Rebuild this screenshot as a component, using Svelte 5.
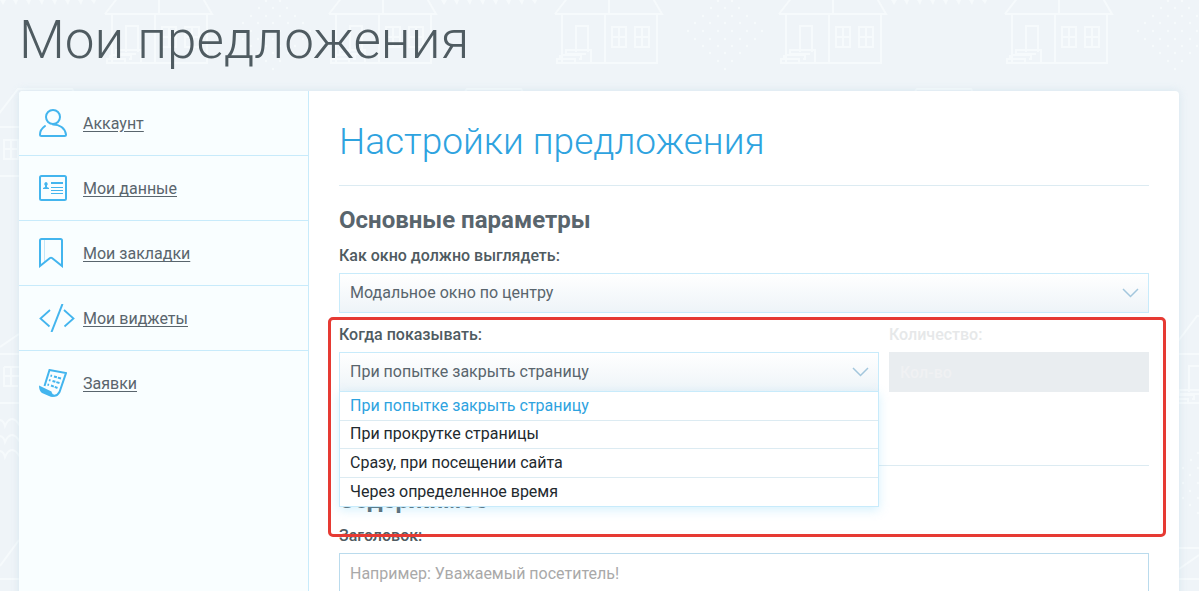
<script lang="ts">
    let views = ['Модальное окно по центру'];
    let moments = [
        'При попытке закрыть страницу',
        'При прокрутке страницы',
        'Сразу, при посещении сайта',
        'Через определенное время'
    ];

    let menu = [
        { icon: 'user', title: 'Аккаунт' },
        { icon: 'card', title: 'Мои данные' },
        { icon: 'bookmark', title: 'Мои закладки' },
        { icon: 'code', title: 'Мои виджеты' },
        { icon: 'scroll', title: 'Заявки' }
    ];

    let view = views[0];
    let moment = moments[0];
    let opened = true;

    // crown of a tree: [y, list of x], around its centre
    let dots = [
        [-30, [-7, 7]], [-23, [-14, 0, 14]], [-15, [-22, -7, 7, 22]],
        [-8, [-30, -15, 0, 15, 30]], [0, [-37, -22, -7, 7, 22, 37]],
        [8, [-30, -15, 0, 15, 30]], [15, [-22, -7, 7, 22]],
        [22, [-15, 0, 15]], [30, [-7, 7]], [38, [0]]
    ] as [number, number[]][];

    function choose(item: string) {
        moment = item;
        opened = false;
    }
</script>

<div class="page">
    <svg class="pattern" aria-hidden="true" fill="none" stroke="#f6fafc" stroke-width="2">
        <defs>
            <g id="house">
                <path d="M1 0H108L97-19 86-38H30L18-22 1 0M43-38 55-15V0M8 0V49H103V0M51 0V49"/>
                <path d="M22 38V12H34V38M37 49V36H12V40H32M7 41H27V45H25M3 45H21V49H3ZM6 41V45"/>
                <path d="M58 13H72V33H58ZM58 23H72M65 13V33M81 13H95V33H81ZM81 23H95M88 13V33"/>
            </g>
            <g id="tree">
                {#each dots as [y, row]}
                    {#each row as x}
                        <circle cx={x} cy={y} r="1.2" fill="#f6fafc" stroke="none"/>
                    {/each}
                {/each}
            </g>
        </defs>
        {#each [104, 328, 554, 778, 1004] as x}
            <use href="#house" x={x} y="14"/>
        {/each}
        {#each [273, 725, 1175] as x}
            <use href="#tree" x={x} y="31"/>
        {/each}
        {#each [0, 441, 891] as x}
            <path fill="#f6fafc" stroke="none" d="M{x} 0h6l-3 5zm13 0h5l-2 5zm13 0h5l-2 5zm13 0h5l-2 5zm13 0h5l-2 5zm13 0h5l-2 5zm13 0h5l-2 5zm13 0h5l-2 4z"/>
        {/each}
        {#each [18, 467, 917] as x}
            <path d="M{x - 20} 115 {x} 89H{x + 54}L{x + 70} 115"/>
        {/each}
        <path d="M0 127H20M4 140H18V159H4ZM4 149H20M11 140V159M0 176H20"/>
        <path d="M0 347 19 334M0 354H20M4 367H20M4 367V386H18M4 376H20M11 367V386M0 403H20M0 579H20M0 566 19 540"/>
        <path d="M0 420q4 1 5 6 3-7 7-7t8 7M0 436q4 1 5 6 3-7 7-7t8 7M0 451q4 1 5 6 3-7 7-7t8 7"/>
        <use href="#house" x="1167" y="354"/>
        <use href="#tree" x="1205" y="483"/>
        <path d="M1179 548H1199M1179 579H1199M1179 569 1199 555"/>
    </svg>

    <h1>Мои предложения</h1>

    <div class="card">
        <nav>
            {#each menu as item}
                <div class="item">
                    <span class="icon">
                        {#if item.icon == 'user'}
                            <svg width="28" height="28" fill="none" stroke="currentColor" stroke-width="2">
                                <circle cx="14" cy="8" r="7"/>
                                <path d="M6 17C2.500 19.500 1 22.500 1 25.500Q1 27 2.500 27H25.500Q27 27 27 25.500C26 19 20.500 15.500 14 15.500" stroke-linecap="round"/>
                            </svg>
                        {:else if item.icon == 'card'}
                            <svg width="28" height="26" fill="none" stroke="currentColor" stroke-width="2">
                                <rect x="1" y="1" width="26" height="24" rx="1.500"/>
                                <path d="M12 8H24"/>
                                <path d="M12 12.500H24M12 15.500H24M12 18.500H24" stroke-width="1"/>
                                <path d="M7 7a2 2 0 0 1 1 3.500V12l2 1v1H4v-1l2-1v-1.500A2 2 0 0 1 7 7Z" fill="currentColor" stroke="none"/>
                            </svg>
                        {:else if item.icon == 'bookmark'}
                            <svg width="24" height="30" fill="none" stroke="currentColor" stroke-width="2">
                                <path d="M5.500 2V25" stroke="#c3e6f9" stroke-width="1"/>
                                <path d="M1 28V2.500Q1 1 2.500 1H21.500Q23 1 23 2.500V28L13 20Q12 19.300 11 20Z"/>
                            </svg>
                        {:else if item.icon == 'code'}
                            <svg width="36" height="28" fill="none" stroke="currentColor" stroke-width="2">
                                <path d="M11 6 1.500 14.500 10.500 22.500M25 6 34.500 14.500 25.500 22.500" stroke-width="1.800"/>
                                <path d="M23.500 0 12.500 28"/>
                            </svg>
                        {:else}
                            <svg width="28" height="28" fill="none" stroke="currentColor" stroke-width="2">
                                <path d="M5.500 17 10.500 1 27 4 20.500 23Q18 27.500 14 26.500"/>
                                <path d="M0 16.500 12.500 22.500Q13 26 17 26.500 14 29 10 27L3 24Q0 22 0 16.500Z" fill="currentColor" stroke="none"/>
                                <path d="M15 7.500 22 9.500M13.500 12 20.500 14M12 16.500 18.500 19" stroke-dasharray="3 1 4"/>
                                <path d="M11.500 6.500 13 7M10 11 11.500 11.500M8.500 15.500 10 16"/>
                            </svg>
                        {/if}
                    </span>
                    <a href="#{item.icon}">{item.title}</a>
                </div>
            {/each}
        </nav>

        <main>
            <h2>Настройки предложения</h2>

            <section>
                <h3>Основные параметры</h3>
                <div class="field">
                    <label for="view">Как окно должно выглядеть:</label>
                    <div class="select">
                        <select id="view" bind:value={view}>
                            {#each views as item}
                                <option>{item}</option>
                            {/each}
                        </select>
                        <svg class="arrow" width="17" height="10" fill="none" stroke="#a3c7dd" stroke-width="1.500">
                            <path d="M1 1 8.500 8.500 16 1"/>
                        </svg>
                    </div>
                </div>

                <div class="row">
                    <div class="field">
                        <label for="moment">Когда показывать:</label>
                        <div class="select">
                            <select id="moment" bind:value={moment}>
                                {#each moments as item}
                                    <option>{item}</option>
                                {/each}
                            </select>
                            <svg class="arrow" width="17" height="10" fill="none" stroke="#a3c7dd" stroke-width="1.500">
                                <path d="M1 1 8.500 8.500 16 1"/>
                            </svg>
                            {#if opened}
                                <div class="list">
                                    {#each moments as item}
                                        <button type="button" class:active={item == moment} on:click={() => choose(item)}>{item}</button>
                                    {/each}
                                </div>
                            {/if}
                        </div>
                    </div>
                    <div class="field count">
                        <label for="count">Количество:</label>
                        <input id="count" type="text" placeholder="Кол-во" disabled>
                    </div>
                    <div class="frame"></div>
                </div>
            </section>

            <section>
                <h3>Содержимое</h3>
                <div class="field">
                    <label for="title">Заголовок:</label>
                    <input id="title" type="text" placeholder="Например: Уважаемый посетитель!">
                </div>
            </section>
        </main>
    </div>
</div>

<style>
    :global(body) {
        margin: 0;
        background: #eff4f8;
    }

    .page, .page * {
        box-sizing: border-box;
    }

    .page {
        position: relative;
        height: 100vh;
        padding: 0 20px 0 19px;
        display: flex;
        flex-direction: column;
        overflow: hidden;
        font-family: Roboto, sans-serif;
        font-size: 16px;
        line-height: 20px;
        color: #59656d;
        background: #eff4f8;
    }

    .pattern {
        position: absolute;
        top: 0;
        left: 0;
        width: 100%;
        height: 100%;
    }

    h1, h2, h3 {
        margin: 0;
    }

    h1 {
        position: relative;
        padding: 10px 0 21px;
        font-size: 53px;
        font-weight: 300;
        line-height: 60px;
        color: #4f5b61;
    }

    .card {
        position: relative;
        flex: 1;
        display: flex;
        background: #fff;
        border-radius: 4px 4px 0 0;
        box-shadow: 0 0 8px rgba(160, 200, 220, .3);
    }

    nav {
        width: 290px;
        flex-shrink: 0;
        background: #f9feff;
        border-right: 1px solid #c8ebfb;
        border-radius: 4px 0 0 0;
    }

    .item {
        height: 65px;
        padding-left: 20px;
        display: flex;
        align-items: center;
        border-bottom: 1px solid #c8ebfb;
    }

    .item:last-child {
        border-color: transparent;
    }

    .icon {
        width: 44px;
        display: flex;
        color: #43b5ee;
    }

    .item a {
        padding-top: 2px;
        color: #59656d;
        text-underline-offset: 2px;
    }

    main {
        flex: 1;
        min-width: 0;
        padding: 0 30px;
    }

    h2 {
        padding: 29px 0 21px;
        font-size: 37px;
        font-weight: 300;
        line-height: 44px;
        color: #2ea3df;
    }

    section {
        padding: 19px 0 73px;
        border-top: 1px solid #dcebf2;
    }

    h3 {
        margin-bottom: 11px;
        font-size: 24px;
        font-weight: 700;
        line-height: 30px;
    }

    label {
        display: block;
        margin-bottom: 7px;
        font-weight: 500;
        color: #4f5b61;
    }

    .row {
        position: relative;
        margin-top: 12px;
        display: grid;
        grid-template-columns: 2fr 1fr;
    }

    .count {
        padding-left: 10px;
    }

    .select {
        position: relative;
    }

    select, input {
        display: block;
        width: 100%;
        height: 40px;
        margin: 0;
        padding: 0 10px;
        border: 1px solid #c8ebfb;
        border-radius: 0;
        font: inherit;
        color: #59656d;
    }

    select {
        appearance: none;
        background: linear-gradient(#fff, #eef4f8);
    }

    input {
        background: #fff;
        border-color: #badbed;
    }

    input::placeholder {
        color: #a9a9a9;
    }

    .arrow {
        position: absolute;
        top: 15px;
        right: 10px;
        pointer-events: none;
    }

    .count label {
        color: #e6e8e9;
    }

    .count input {
        background: #e9edf0;
        border-color: #e9edf0;
    }

    .count input::placeholder {
        color: #f0f1f3;
        font-weight: 500;
    }

    .list {
        position: absolute;
        z-index: 1;
        top: 39px;
        left: 0;
        right: 0;
        height: 116px;
        display: grid;
        grid-auto-rows: 1fr;
        background: #fff;
        border: 1px solid #c8ebfb;
        box-shadow: 0 3px 10px rgba(120, 210, 250, .3);
    }

    .list button {
        padding: 0 10px;
        border: 0;
        border-bottom: 1px solid #dcebf2;
        background: none;
        font: inherit;
        text-align: left;
        color: #22292e;
        cursor: pointer;
    }

    .list button:last-child {
        border-bottom: 0;
    }

    .list button:hover, .list .active {
        color: #2ea3df;
    }

    .frame {
        position: absolute;
        z-index: 2;
        top: -8px;
        bottom: -145px;
        left: -11px;
        right: -17px;
        border: 3px solid #e63a33;
        border-radius: 5px;
        pointer-events: none;
    }
</style>
